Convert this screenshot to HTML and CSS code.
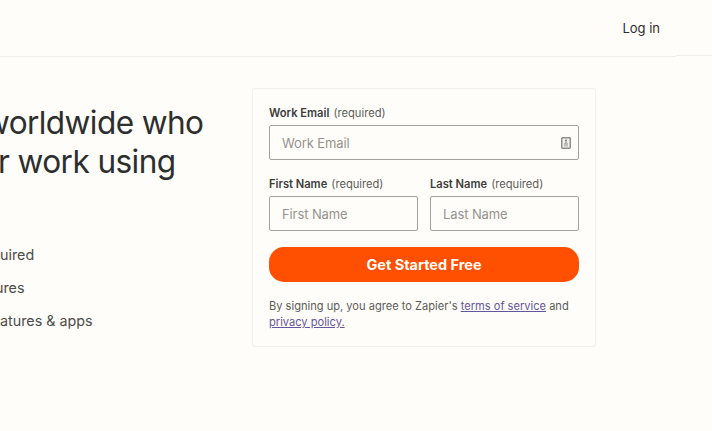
FILE: index.html
```
<!DOCTYPE html>
<html lang="en">
<head>
  <meta charset="UTF-8" />
  <meta name="viewport" content="width=device-width, initial-scale=1.0" />
  <title>Sign up | Zapier</title>
  <link rel="stylesheet" href="styles.css">
</head>

<body>
  <header>
    <div class="nav">
      <a href="#">Log in</a>
    </div>
    <div class="nav-end"></div>
  </header>

  <main class="container">
    <section class="intro">
      <h1>
        <span class="line-first">worldwide who</span>
        <span>r work using</span>
      </h1>
      <ul>
        <li>uired</li>
        <li class="cut">ures</li>
        <li>atures &amp; apps</li>
      </ul>
    </section>

    <form class="card">
      <div class="field">
        <label for="email"><strong>Work Email</strong> (required)</label>
        <div class="input-wrap">
          <input type="email" id="email" placeholder="Work Email" required />
          <svg class="autofill" width="10" height="12" viewBox="0 0 10 12">
            <rect x="0.75" y="0.75" width="8.5" height="10.5" rx="0.7" fill="#f1f0ed" stroke="#8f8f8d" stroke-width="1.5" />
            <circle cx="5" cy="3.6" r="1" fill="#777" />
            <path d="M4.4 4.5h1.2v1.8H4.4zM3 6.6h4v.9H3zM3 8.4h4v.8H3z" fill="#8a8a88" />
          </svg>
        </div>
      </div>

      <div class="row">
        <div class="field">
          <label for="first"><strong>First Name</strong> (required)</label>
          <input type="text" id="first" placeholder="First Name" required />
        </div>
        <div class="field">
          <label for="last"><strong>Last Name</strong> (required)</label>
          <input type="text" id="last" placeholder="Last Name" required />
        </div>
      </div>

      <button type="submit">Get Started Free</button>

      <p class="terms">By signing up, you agree to Zapier's <a href="#">terms of service</a> and <a href="#">privacy policy.</a></p>
    </form>
  </main>
</body>
</html>
```
FILE: styles.css
```
:root {
  --primary: #ff4f00;
  --bg: #fffdf9;
  --text: #2d2e2e;
  --text-muted: #5b5c5a;
  --placeholder: #95928e;
  --line: #f0efec;
  --link: #64569c;
}

* {
  box-sizing: border-box;
}

body {
  margin: 0;
  font-family: Inter, sans-serif;
  background-color: var(--bg);
  color: var(--text);
  overflow: hidden;
}

header {
  display: flex;
  height: 57px;
}

.nav {
  width: 676px;
  padding: 19px 16px 0 0;
  border-bottom: 1px solid var(--line);
  text-align: right;
}

.nav a {
  display: block;
  font-size: 13px;
  line-height: 18px;
  color: var(--text);
  text-decoration: none;
}

.nav-end {
  flex: 1;
  height: 56px;
  border-bottom: 1px solid var(--line);
}

.container {
  display: grid;
  grid-template-columns: 252px 344px;
  padding-top: 31px;
}

.intro {
  overflow: hidden;
  white-space: nowrap;
}

h1 {
  margin: 16px 0 0;
  font-size: 31.6px;
  font-weight: 400;
  line-height: 38.5px;
  letter-spacing: -0.6px;
}

h1 span {
  display: block;
  margin-left: -2px;
}

h1 .line-first {
  margin-left: -16px;
}

ul {
  margin: 57px 0 0;
  padding: 0;
  list-style: none;
}

li {
  height: 33px;
  font-size: 14.3px;
  line-height: 33px;
  color: #4a4b4b;
}

li.cut {
  margin-left: -5px;
}

.card {
  height: 259px;
  padding: 16px;
  border: 1px solid var(--line);
  border-radius: 3px;
}

label {
  display: block;
  height: 20px;
  font-size: 11.15px;
  line-height: 16px;
  color: var(--text-muted);
  white-space: nowrap;
}

label strong {
  margin-right: 1px;
  font-weight: 600;
  color: #3b3c3c;
}

.input-wrap {
  position: relative;
}

input {
  display: block;
  width: 100%;
  height: 35px;
  padding: 0 12px;
  border: 1px solid #a3a2a0;
  border-radius: 2px;
  background: var(--bg);
  font: 13px Inter, sans-serif;
  letter-spacing: -0.1px;
}

input::placeholder {
  color: var(--placeholder);
}

.autofill {
  position: absolute;
  top: 12px;
  right: 8px;
}

.row {
  display: grid;
  grid-template-columns: 1fr 1fr;
  gap: 12px;
  margin-top: 16px;
}

button {
  display: block;
  width: 100%;
  height: 35px;
  margin-top: 16px;
  border: none;
  border-radius: 15px;
  background-color: var(--primary);
  color: var(--bg);
  font: 700 14.5px Inter, sans-serif;
}

.terms {
  margin: 16px 0 0;
  font-size: 11.1px;
  line-height: 16px;
  color: var(--text-muted);
}

.terms a {
  color: var(--link);
}
```
